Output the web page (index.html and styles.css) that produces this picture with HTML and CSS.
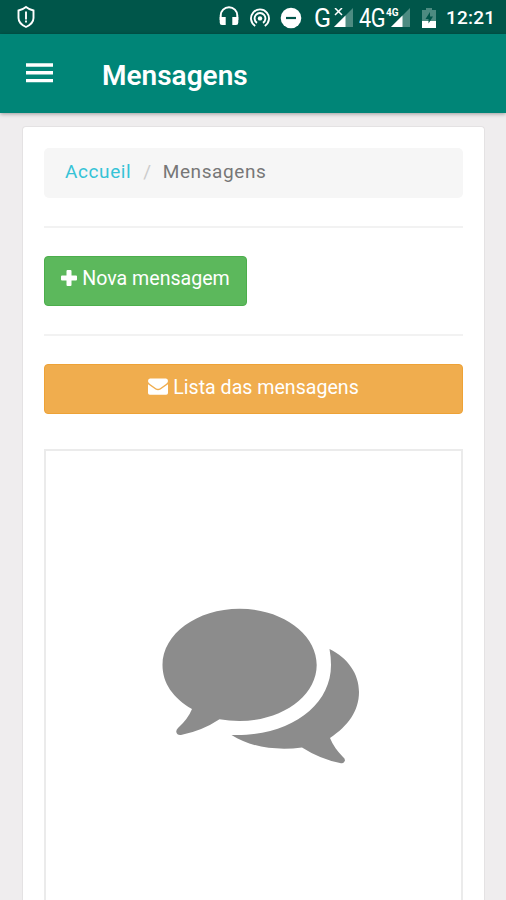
FILE: index.html
```html
<!DOCTYPE html>
<html lang="pt">
<head>
  <meta charset="UTF-8" />
  <meta name="viewport" content="width=device-width, initial-scale=1" />
  <title>Mensagens</title>
  <link rel="stylesheet" href="styles.css">
</head>
<body>
  <div class="status-bar">
    <svg class="shield" width="20" height="24" viewBox="0 0 20 24" fill="none" stroke="#fff" stroke-width="1.9">
      <path d="M10 2Q13 4.500 17.500 5.500V13Q17.500 18.500 10 22Q2.500 18.500 2.500 13V5.500Q7 4.500 10 2Z" />
      <path d="M10 6.500v8M10 15.500v2" />
    </svg>
    <svg class="headphones" width="20" height="20" viewBox="0 0 20 20">
      <path d="M1.700 14V9.500a8.300 8.300 0 0 1 16.600 0V14" fill="none" stroke="#fff" stroke-width="2" />
      <path d="M.7 11h6v8H3Q.7 19 .7 16.500ZM13.300 11h6v5.500Q19.300 19 17 19h-3.700Z" fill="#fff" />
    </svg>
    <svg class="hotspot" width="20" height="20" viewBox="0 0 20 20" fill="none" stroke="#fff" stroke-width="1.900">
      <path d="M5.200 18A9 9 0 1 1 14.800 18" />
      <path d="M7 14.900A5.400 5.400 0 1 1 13 14.900" />
      <circle cx="10" cy="10.400" r="2.200" fill="#fff" stroke="none" />
    </svg>
    <svg class="dnd" width="22" height="22" viewBox="0 0 22 22">
      <circle cx="11" cy="11" r="10.300" fill="#fff" />
      <path d="M6 11h10" stroke="#00564a" stroke-width="2.200" />
    </svg>
    <span class="network net-g">G</span>
    <svg class="signal" width="21" height="20" viewBox="0 0 21 20">
      <path d="M20 0V19H1Z" fill="#4d8b81" />
      <path d="M12.500 7.500V19H1Z" fill="#fff" />
      <path d="M2 0l7 7M9 0l-7 7" stroke="#fff" stroke-width="1.500" />
    </svg>
    <span class="network net-4g">4G</span>
    <div class="signal-lte">
      <svg width="21" height="20" viewBox="0 0 21 20">
        <path d="M20 0V19H1Z" fill="#4d8b81" />
        <path d="M12.500 7.500V19H1Z" fill="#fff" />
      </svg>
      <span>4G</span>
    </div>
    <svg class="battery" width="14" height="20" viewBox="0 0 14 20">
      <path d="M4 0h6v2h4v18H0V2h4Z" fill="#4d8b81" />
      <path d="M0 13h14v7H0Z" fill="#fff" />
      <path d="M8 4L3.500 11H6.500V15.500L11 8.500H8Z" fill="#00564a" />
    </svg>
    <span class="clock">12:21</span>
  </div>

  <header class="toolbar">
    <svg class="menu" width="27" height="20" viewBox="0 0 27 20">
      <path d="M0 2h27M0 9.800h27M0 17.600h27" stroke="#fff" stroke-width="3.400" />
    </svg>
    <h1>Mensagens</h1>
  </header>

  <main class="card">
    <div class="breadcrumb">
      <a>Accueil</a>
      <span class="slash">/</span>
      <span class="current">Mensagens</span>
    </div>
    <hr>
    <a class="btn btn-success">
      <svg width="16" height="16" viewBox="0 0 16 16">
        <path d="M5.500 1q0-1 1-1h3q1 0 1 1v4.500h4.500q1 0 1 1v3q0 1-1 1h-4.500v4.500q0 1-1 1h-3q-1 0-1-1v-4.500H1q-1 0-1-1v-3q0-1 1-1h4.500Z" fill="#fff" />
      </svg>
      <span>Nova mensagem</span>
    </a>
    <hr>
    <a class="btn btn-warning">
      <svg width="20" height="17" viewBox="0 0 20 17">
        <path d="M0 3Q0 .500 2 .500H18Q20 .500 20 3Q20 4.500 18 6L12 10.200Q10 11.500 8 10.200L2 6Q0 4.500 0 3Z" fill="#fff" />
        <path d="M0 6.300L7.500 11.500Q10 13 12.500 11.500L20 6.300V15Q20 16.800 18.200 16.800H1.800Q0 16.800 0 15Z" fill="#fff" />
      </svg>
      <span>Lista das mensagens</span>
    </a>
    <div class="panel">
      <svg width="198" height="156" viewBox="162 608 198 156" fill="#8c8c8c">
        <path d="M192 709C173 698 162.500 683 162.500 665C162.500 634 197 608.700 239.500 608.700S316.700 634 316.700 665S282 721 239.500 721Q229 721 219.500 719.300Q202 731 181 735Q177 735.500 176.300 732Q176 730 178 728Q188 719 192 709Z" />
        <path d="M329.500 649C348 658 359 674 359 692C359 711 348 726 330 738Q334 748 343 757Q345.500 759 344.800 761Q343.500 764 340 763Q320 759 302 747.500C276 751 250 747 231.500 735C288 737 331 707 331 665Q331 657 329.500 649Z" />
      </svg>
    </div>
  </main>
</body>
</html>
```
FILE: styles.css
```css
* {
  box-sizing: border-box;
}
body {
  margin: 0;
  height: 900px;
  overflow: hidden;
  background: #efedee;
  font-family: Roboto, "Liberation Sans", sans-serif;
  display: flex;
  flex-direction: column;
}
.status-bar {
  flex: none;
  height: 34px;
  background: #00564a;
  color: #fff;
  display: flex;
  align-items: flex-start;
}
.status-bar svg {
  flex: none;
  display: block;
}
.shield {
  margin: 5px 0 0 16px;
}
.headphones {
  margin: 6px 0 0 183px;
}
.hotspot {
  margin: 8px 0 0 11px;
}
.dnd {
  margin: 7px 0 0 10px;
}
.network {
  font-size: 25px;
  line-height: 37px;
  height: 34px;
}
.net-g {
  width: 18px;
  margin-left: 12px;
}
.signal {
  margin: 8px 0 0 1px;
}
.net-4g {
  width: 27px;
  margin-left: 5px;
  letter-spacing: -0.5px;
  transform: scaleX(0.87);
  transform-origin: left;
}
.signal-lte {
  position: relative;
  width: 21px;
  margin: 8px 0 0 4px;
}
.signal-lte span {
  position: absolute;
  left: -4px;
  top: -1px;
  font-size: 10px;
  line-height: 11px;
  font-weight: 700;
}
.battery {
  margin: 8px 0 0 11px;
}
.clock {
  margin-left: 10px;
  font-size: 19px;
  line-height: 36px;
  font-weight: 500;
  letter-spacing: 0.2px;
}
.toolbar {
  flex: none;
  height: 79px;
  background: #008577;
  box-shadow: 0 1px 4px rgba(0,0,0,0.35);
  display: flex;
  align-items: flex-start;
}
.menu {
  flex: none;
  margin: 29px 0 0 26px;
}
.toolbar h1 {
  margin: 26px 0 0 49px;
  color: #fff;
  font-size: 28px;
  line-height: 32px;
  font-weight: 600;
}
.card {
  flex: 1;
  margin: 13px 21px 0 22px;
  padding: 21px 21px 0;
  background: #fff;
  border: 1px solid #e4e2e3;
  border-bottom: none;
  border-radius: 4px 4px 0 0;
  display: flex;
  flex-direction: column;
  align-items: stretch;
}
.breadcrumb {
  flex: none;
  height: 50px;
  padding: 0 21px;
  background: #f6f6f6;
  border-radius: 5px;
  font-size: 19px;
  line-height: 48px;
  letter-spacing: 0.6px;
  display: flex;
}
.breadcrumb a {
  color: #35c3d6;
}
.slash {
  margin: 0 11px 0 12px;
  color: #ccc;
}
.current {
  color: #777;
}
hr {
  width: 100%;
  margin: 28px 0;
  border: none;
  border-top: 2px solid #f2f2f2;
}
.btn {
  flex: none;
  height: 50px;
  padding-top: 12px;
  border-radius: 4px;
  color: #fff;
  font-size: 19.6px;
  line-height: 20px;
  display: flex;
  justify-content: center;
  align-items: flex-start;
  gap: 5px;
}
.btn svg {
  flex: none;
  margin-top: 1px;
}
.btn-success {
  width: 203px;
  background: #5cb85c;
  border: 1px solid #4cae4c;
}
.btn-warning {
  padding-top: 13px;
  background: #f0ad4e;
  border: 1px solid #eea236;
}
.btn-warning svg {
  margin-top: 0;
}
.panel {
  flex: 1;
  margin-top: 35px;
  padding: 157px 0 0 14px;
  border: 2px solid #ebebeb;
  border-bottom: none;
  text-align: center;
}
```
